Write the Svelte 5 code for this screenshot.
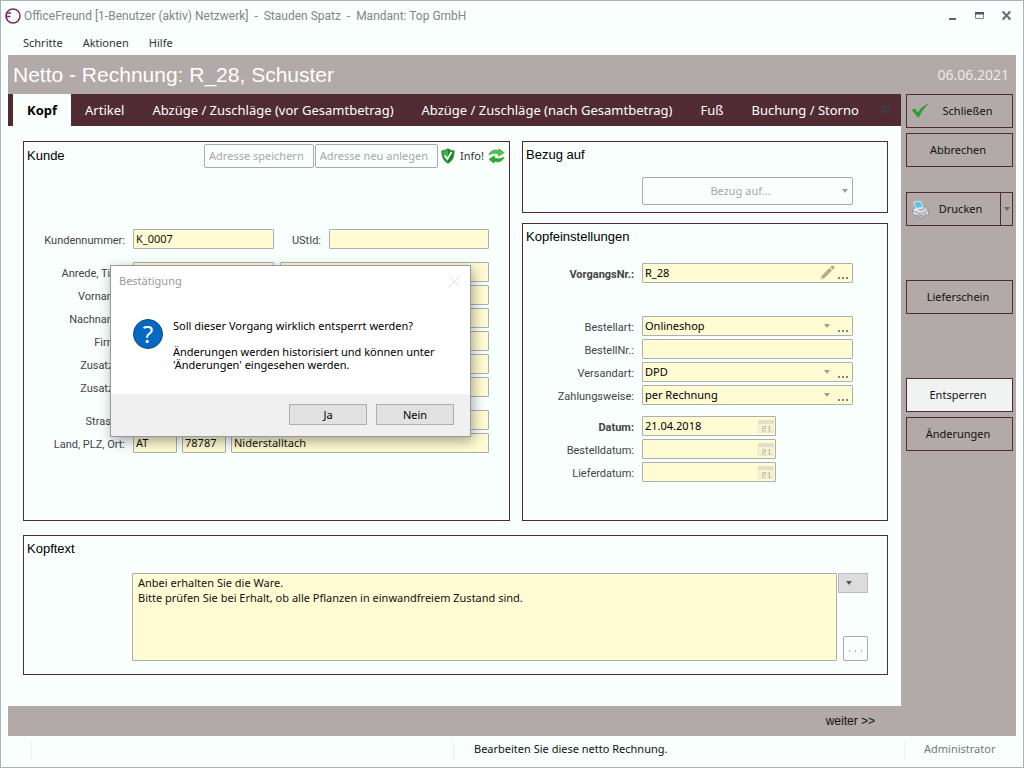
<script>
    const menu = ["Schritte", "Aktionen", "Hilfe"];

    const tabs = [
        "Kopf",
        "Artikel",
        "Abzüge / Zuschläge (vor Gesamtbetrag)",
        "Abzüge / Zuschläge (nach Gesamtbetrag)",
        "Fuß",
        "Buchung / Storno",
    ];
    let activeTab = "Kopf";

    const addressRows = [
        { id: "vorname", label: "Vorname:" },
        { id: "nachname", label: "Nachname:" },
        { id: "firma", label: "Firma:" },
        { id: "zusatz1", label: "Zusatz 1:" },
        { id: "zusatz2", label: "Zusatz 2:" },
    ];

    const dates = [
        { id: "datum", label: "Datum:", value: "21.04.2018", required: true },
        { id: "bestelldatum", label: "Bestelldatum:", value: "" },
        { id: "lieferdatum", label: "Lieferdatum:", value: "" },
    ];

    let dialogOpen = true;

    function closeDialog() {
        dialogOpen = false;
    }
</script>

{#snippet arrow()}
    <svg class="arrow" width="6" height="4" viewBox="0 0 6 4" aria-hidden="true">
        <path d="M0 0h6L3 4z" fill="currentColor" />
    </svg>
{/snippet}

{#snippet dots()}
    <svg width="11" height="2" viewBox="0 0 11 2" aria-hidden="true">
        <path d="M0 0h2v2H0zM4 0h2v2H4zM8 0h2v2H8z" fill="#85857c" />
    </svg>
{/snippet}

{#snippet combo(id, label, value)}
    <label for={id}>{label}</label>
    <div class="box">
        <select {id}>
            <option>{value}</option>
        </select>
        {@render arrow()}
        <button class="more" aria-label="Auswahl bearbeiten">{@render dots()}</button>
    </div>
{/snippet}

<div class="window">
    <header class="titlebar">
        <svg width="16" height="16" viewBox="0 0 16 16" aria-hidden="true">
            <circle cx="8" cy="8" r="7" fill="none" stroke="#7c2a70" stroke-width="1.5" />
            <path d="M1 5h5M1 8.500h4.500M1.500 5v6" fill="none" stroke="#7c2a70" stroke-width="1.300" />
        </svg>
        <span class="caption">OfficeFreund [1-Benutzer (aktiv) Netzwerk] &nbsp;-&nbsp; Stauden Spatz &nbsp;-&nbsp; Mandant: Top GmbH</span>
        <div class="window-buttons">
            <button aria-label="Minimieren">
                <svg width="10" height="10" viewBox="0 0 10 10"><path d="M1 7h7v2H1z" fill="#5b6275" /></svg>
            </button>
            <button aria-label="Maximieren">
                <svg width="10" height="10" viewBox="0 0 10 10">
                    <path d="M.5 1.500h8v6h-8z" fill="none" stroke="#7a829b" />
                    <path d="M0 1h9v2.500H0z" fill="#50566a" />
                </svg>
            </button>
            <button aria-label="Schließen">
                <svg width="10" height="10" viewBox="0 0 10 10">
                    <path d="M1 1l7 7M8 1L1 8" stroke="#656c82" stroke-width="2" />
                    <path d="M0 1h3M6 1h3M0 8h3M6 8h3" stroke="#656c82" />
                </svg>
            </button>
        </div>
    </header>

    <nav class="menu">
        {#each menu as item}
            <button>{item}</button>
        {/each}
    </nav>

    <div class="frame">
        <div class="heading">
            <h1>Netto - Rechnung: R_28, Schuster</h1>
            <time datetime="2021-06-06">06.06.2021</time>
        </div>

        <div class="columns">
            <div class="page">
                <div class="tabs" role="tablist">
                    {#each tabs as tab}
                        <button
                            role="tab"
                            aria-selected={activeTab === tab}
                            class:active={activeTab === tab}
                            on:click={() => (activeTab = tab)}>{tab}</button
                        >
                    {/each}
                    <svg class="overflow" width="9" height="8" viewBox="0 0 9 8" aria-hidden="true">
                        <path d="M0 0h9v2H0zM0 4h9L4.500 8z" fill="#3b3d49" />
                    </svg>
                </div>

                <main class="content">
                    <section class="group kunde">
                        <div class="group-head">
                            <h2>Kunde</h2>
                            <button class="ghost" disabled>Adresse speichern</button>
                            <button class="ghost" disabled>Adresse neu anlegen</button>
                            <button class="info">
                                <svg width="14" height="16" viewBox="0 0 14 16" aria-hidden="true">
                                    <path d="M7 .5C5 2 3 2.500.7 2.500c0 6 1 10 6.300 13 5.300-3 6.300-7 6.300-13C11 2.500 9 2 7 .5z" fill="#14881b" stroke="#8da38f" />
                                    <path d="M7 2C5.500 3 4 3.500 2.200 3.700c0 4 .8 7 4.800 9.800z" fill="#3cb944" />
                                    <path d="M3.500 7.500l3 3.500 4-7" fill="none" stroke="#fff" stroke-width="1.800" />
                                </svg>
                                Info!
                            </button>
                            <button class="refresh" aria-label="Aktualisieren">
                                <svg width="17" height="16" viewBox="0 0 17 16" aria-hidden="true">
                                    <path d="M1 7c1-4 5-6 10-4.300V.7l5 4-5.500 3.600V6C7 4.800 4 5 1 7z" fill="#4cc84a" stroke="#188a1c" stroke-width=".5" />
                                    <path d="M16 9c-1 4-5 6-10 4.300v2l-5-4 5.500-3.600V10c3.500 1.200 6.500 1 9.500-1z" fill="#23b123" stroke="#188a1c" stroke-width=".5" />
                                </svg>
                            </button>
                        </div>

                        <div class="form">
                            <label for="kundennummer">Kundennummer:</label>
                            <div class="fields number">
                                <input id="kundennummer" value="K_0007" />
                                <label for="ustid">UStId:</label>
                                <input id="ustid" />
                            </div>

                            <label class="break" for="anrede">Anrede, Titel:</label>
                            <div class="fields salutation break">
                                <input id="anrede" />
                                <input id="titel" aria-label="Titel" />
                            </div>

                            {#each addressRows as row}
                                <label for={row.id}>{row.label}</label>
                                <input id={row.id} />
                            {/each}

                            <label class="break" for="strasse">Strasse:</label>
                            <input class="break" id="strasse" />

                            <label for="land">Land, PLZ, Ort:</label>
                            <div class="fields city">
                                <input id="land" value="AT" />
                                <input aria-label="PLZ" value="78787" />
                                <input aria-label="Ort" value="Niderstalltach" />
                            </div>
                        </div>

                        {#if dialogOpen}
                            <div class="dialog" role="dialog" aria-labelledby="dialog-title">
                                <div class="dialog-head">
                                    <span id="dialog-title">Bestätigung</span>
                                    <button aria-label="Dialog schließen" on:click={closeDialog}>
                                        <svg width="11" height="11" viewBox="0 0 11 11">
                                            <path d="M.5.5l10 10M10.500.5l-10 10" stroke="#dedede" />
                                        </svg>
                                    </button>
                                </div>
                                <div class="dialog-body">
                                    <div class="question" aria-hidden="true">?</div>
                                    <div>
                                        <p>Soll dieser Vorgang wirklich entsperrt werden?</p>
                                        <p>
                                            Änderungen werden historisiert und können unter
                                            <br />'Änderungen' eingesehen werden.
                                        </p>
                                    </div>
                                </div>
                                <div class="dialog-foot">
                                    <button on:click={closeDialog}>Ja</button>
                                    <button on:click={closeDialog}>Nein</button>
                                </div>
                            </div>
                        {/if}
                    </section>

                    <section class="group bezug">
                        <h2>Bezug auf</h2>
                        <button class="ghost reference" disabled>
                            <span>Bezug auf...</span>
                            {@render arrow()}
                        </button>
                    </section>

                    <section class="group settings">
                        <h2>Kopfeinstellungen</h2>
                        <div class="form">
                            <label class="required" for="vorgang">VorgangsNr.:</label>
                            <div class="box">
                                <input id="vorgang" value="R_28" />
                                <svg width="16" height="16" viewBox="0 0 16 16" aria-hidden="true">
                                    <path d="M2 11.500L10.500 3l2.500 2.500L4.500 14z" fill="#adab91" />
                                    <path d="M11.300 2.200L13 .5c1-.5 3 1.300 2.500 2.500l-1.700 1.700z" fill="#adab91" />
                                    <path d="M1 15l1-3.500L4.500 14z" fill="#d9d7b5" />
                                </svg>
                                <button class="more" aria-label="Nummer bearbeiten">{@render dots()}</button>
                            </div>

                            <div class="spacer"></div>
                            {@render combo("bestellart", "Bestellart:", "Onlineshop")}
                            <label for="bestellnr">BestellNr.:</label>
                            <input id="bestellnr" />
                            {@render combo("versandart", "Versandart:", "DPD")}
                            {@render combo("zahlungsweise", "Zahlungsweise:", "per Rechnung")}

                            <div class="gap"></div>
                            {#each dates as date}
                                <label class:required={date.required} for={date.id}>{date.label}</label>
                                <div class="box date">
                                    <input id={date.id} value={date.value} />
                                    <svg width="16" height="16" viewBox="0 0 16 16" aria-hidden="true">
                                        <path d="M.5 2.500h15v12H.5z" fill="#f6f3d6" stroke="#e9e6ca" />
                                        <path d="M0 2h16v4H0z" fill="#e3e0c5" />
                                        <path d="M4 8.500h3.500v2h-3v2.500H8M10 9.500l1.500-1V13M10 13h3.500" fill="none" stroke="#c5c2a6" stroke-width="1.200" />
                                    </svg>
                                </div>
                            {/each}
                        </div>
                    </section>

                    <section class="group text">
                        <h2><label for="kopftext">Kopftext</label></h2>
                        <div class="text-row">
                            <textarea
                                id="kopftext"
                                value={"Anbei erhalten Sie die Ware.\nBitte prüfen Sie bei Erhalt, ob alle Pflanzen in einwandfreiem Zustand sind."}
                            ></textarea>
                            <div class="text-tools">
                                <button class="template" aria-label="Vorlage wählen">{@render arrow()}</button>
                                <button class="ghost edit" disabled aria-label="Text bearbeiten">
                                    <svg width="14" height="2" viewBox="0 0 14 2"><path d="M0 0h1v2H0zM6 0h1v2H6zM12 0h1v2h-1z" fill="#b5b5a5" /></svg>
                                </button>
                            </div>
                        </div>
                    </section>
                </main>

                <footer class="pager">
                    <button>weiter &gt;&gt;</button>
                </footer>
            </div>

            <aside class="side">
                <button class="with-icon">
                    <svg width="16" height="14" viewBox="0 0 16 14" aria-hidden="true">
                        <path d="M0 6l3-1 3 4C8 5 11 2 16 0 12 4 9 8 6.500 13.500z" fill="#22a422" stroke="#3f8f3a" stroke-width=".5" />
                    </svg>
                    <span>Schließen</span>
                </button>
                <button>Abbrechen</button>
                <div class="split">
                    <button class="with-icon">
                        <svg width="17" height="17" viewBox="0 0 17 17" aria-hidden="true">
                            <path d="M.5 8.500l4-2.500h9l3 4v3.500L9.500 16.500 .5 13z" fill="#dfe2e8" stroke="#858b98" stroke-width=".8" />
                            <path d="M1.500 1l7-.5 2.500 5.500-6.500 1.500z" fill="#4fc3ea" stroke="#e8f6fa" stroke-width=".8" />
                            <path d="M1 10l8 3 7-3.500M5 13.500l5 1.500 5-2.500" fill="none" stroke="#8f95a3" />
                            <path d="M6 8.500l6-1.500 2 1.500L8.500 10.500z" fill="#b3b8c3" />
                            <path d="M13 12h2v1h-2z" fill="#d8bd45" />
                        </svg>
                        <span>Drucken</span>
                    </button>
                    <button class="drop" aria-label="Druckoptionen">{@render arrow()}</button>
                </div>
                <button class="delivery">Lieferschein</button>
                <button class="unlock">Entsperren</button>
                <button>Änderungen</button>
            </aside>
        </div>
    </div>

    <footer class="status">
        <span></span>
        <span></span>
        <span class="message">Bearbeiten Sie diese netto Rechnung.</span>
        <span class="user">Administrator</span>
    </footer>
</div>

<style>
    :global(body) {
        margin: 0;
    }

    .window {
        --paper: #f8fffd;
        --wine: #512b34;
        --taupe: #b2a9a9;
        --yellow: #fffbd2;
        --line: #a9afb5;
        --ui: "Noto Sans", "Open Sans", sans-serif;
        --arial: "Liberation Sans", Arial, sans-serif;

        box-sizing: border-box;
        min-height: 100vh;
        display: flex;
        flex-direction: column;
        padding: 0 7px;
        border: 1px solid #b0b0ba;
        background: var(--paper);
        color: #111;
        font: 11px/16px var(--ui);
    }

    .window :global(*) {
        box-sizing: border-box;
    }

    button,
    input,
    select,
    textarea {
        margin: 0;
        padding: 0;
        border: 0;
        border-radius: 0;
        background: none;
        color: inherit;
        font: inherit;
    }

    svg {
        display: block;
        flex: none;
    }

    h1,
    h2,
    p {
        margin: 0;
        font-weight: normal;
    }

    /* Title bar and menu */
    .titlebar {
        display: flex;
        align-items: center;
        height: 30px;
        margin-left: -3px;
        gap: 3px;
    }

    .caption {
        flex: 1;
        color: #858585;
        font: 12px/16px Roboto, var(--ui);
    }

    .window-buttons {
        display: flex;
        gap: 17px;
        padding-right: 4px;
    }

    .menu {
        display: flex;
        gap: 20px;
        height: 24px;
        padding-left: 15px;
        color: #333;
    }

    /* Frame */
    .frame {
        flex: 1;
        display: flex;
        flex-direction: column;
        background: var(--taupe);
    }

    .heading {
        display: flex;
        align-items: center;
        justify-content: space-between;
        height: 39px;
        padding: 0 7px 0 5px;
        color: #fff;
    }

    h1 {
        font: 21px/24px var(--arial);
    }

    time {
        color: #efeeee;
        font: 14px/20px "Open Sans", "Noto Sans", sans-serif;
    }

    .columns {
        flex: 1;
        display: grid;
        grid-template-columns: 1fr 115px;
    }

    .page {
        display: flex;
        flex-direction: column;
    }

    /* Tabs */
    .tabs {
        display: flex;
        align-items: center;
        height: 32px;
        padding-left: 5px;
        background: var(--wine);
        color: #fff;
        font: 13px/20px var(--ui);
    }

    .tabs button {
        height: 32px;
        padding: 0 14px;
        white-space: nowrap;
    }

    .tabs .active {
        background: var(--paper);
        color: #000;
        font-weight: bold;
    }

    .overflow {
        margin: 0 11px 0 auto;
    }

    /* Groups */
    .content {
        flex: 1;
        display: grid;
        grid-template-columns: 487fr 366fr;
        grid-template-rows: 72px 298px 140px;
        gap: 10px 12px;
        padding: 15px 13px 31px 15px;
        background: var(--paper);
    }

    .group {
        border: 1px solid var(--wine);
        padding: 1px 34px 0 3px;
    }

    h2 {
        font: 13px/24px var(--arial);
        color: #000;
    }

    .kunde {
        position: relative;
        grid-row: 1 / 3;
        padding: 1px 4px 0 3px;
    }

    .text {
        grid-column: 1 / 3;
        margin-top: 4px;
        margin-bottom: -4px;
        padding-right: 19px;
    }

    .group-head {
        display: flex;
        align-items: center;
        gap: 1px;
    }

    .group-head h2 {
        flex: 1;
        line-height: 26px;
    }

    .ghost {
        height: 24px;
        padding: 0 9px 0 4px;
        border: 1px solid #aaa;
        border-radius: 2px;
        color: #a8a8a8;
    }

    .info {
        display: flex;
        align-items: center;
        gap: 5px;
        margin: 0 3px 0 2px;
        color: #333;
    }

    /* Form rows */
    .form {
        display: grid;
        grid-template-columns: 98px 1fr;
        gap: 3px 8px;
    }

    .kunde .form {
        padding: 60px 16px 0 0;
    }

    .settings .form {
        grid-template-columns: 108px 1fr;
        padding-top: 14px;
    }

    .form label {
        padding-top: 3px;
        color: #444;
        font: 11px/17px Roboto, var(--arial);
        text-align: right;
        white-space: nowrap;
    }

    .form label.required {
        font-weight: bold;
    }

    .form input,
    .box {
        min-width: 0;
        width: 100%;
        height: 20px;
        padding: 0 2px;
        border: 1px solid var(--line);
        border-radius: 1px;
        background: var(--yellow);
    }

    .form input {
        padding-bottom: 2px;
    }

    .form .break {
        margin-top: 10px;
    }

    .fields {
        display: grid;
        gap: 6px;
    }

    .number {
        grid-template-columns: 141fr 39px 160fr;
        gap: 8px;
    }

    .salutation {
        grid-template-columns: 141fr 209fr;
    }

    .city {
        grid-template-columns: 44px 44px 1fr;
        gap: 5px;
    }

    .box {
        display: flex;
        align-items: center;
        color: #000;
    }

    .form .box input,
    .box select {
        flex: 1;
        height: 18px;
        padding: 0;
        border: 0;
        background: none;
        appearance: none;
    }

    .form .box input {
        padding-bottom: 2px;
    }

    .arrow {
        color: #a19f8b;
    }

    .more {
        display: flex;
        align-items: flex-end;
        height: 12px;
        margin: 0 1px 0 3px;
    }

    .box .arrow + .more {
        margin-left: 8px;
    }

    .form .date {
        width: 134px;
        padding-right: 1px;
    }

    .spacer {
        grid-column: 1 / 3;
        height: 27px;
    }

    .gap {
        grid-column: 1 / 3;
        height: 5px;
    }

    .reference {
        display: flex;
        align-items: center;
        width: calc(100% - 116px);
        height: 28px;
        margin: 10px 0 0 116px;
        padding: 0 4px 0 0;
    }

    .reference span {
        flex: 1;
        padding-right: 4px;
    }

    /* Kopftext */
    .text-row {
        display: flex;
        gap: 1px;
        padding: 12px 0 0 105px;
    }

    textarea {
        flex: 1;
        height: 88px;
        padding: 1px 5px;
        border: 1px solid var(--line);
        border-radius: 1px;
        background: var(--yellow);
        line-height: 15px;
        resize: none;
    }

    .text-tools {
        display: flex;
        flex-direction: column;
        align-items: flex-end;
        justify-content: space-between;
    }

    .template {
        width: 30px;
        height: 20px;
        padding-left: 7px;
        border: 1px solid #bdbdbd;
        background: #dcdcdc;
    }

    .template .arrow {
        color: #555;
    }

    .edit {
        width: 25px;
        height: 25px;
        padding: 4px 0 0 5px;
    }

    .pager {
        display: flex;
        justify-content: flex-end;
        height: 30px;
        padding-right: 26px;
        font: 12px/16px var(--arial);
    }

    /* Side buttons */
    .side {
        display: flex;
        flex-direction: column;
        gap: 5px;
        padding: 0 3px 0 5px;
    }

    .side button {
        height: 34px;
        padding-right: 3px;
        border: 1px solid var(--wine);
    }

    .side .with-icon {
        display: flex;
        align-items: center;
        padding: 0 5px;
    }

    .with-icon span {
        flex: 1;
    }

    .split {
        display: flex;
        margin: 20px 0 49px;
    }

    .split .with-icon {
        flex: 1;
        padding-right: 8px;
    }

    .side .drop {
        width: 13px;
        margin-left: -1px;
        padding-left: 3px;
    }

    .drop .arrow {
        color: #666;
    }

    .side .delivery {
        margin-bottom: 59px;
    }

    .side .unlock {
        background: #f1f3f2;
    }

    /* Status bar */
    .status {
        display: grid;
        grid-template-columns: 23px 422px 1fr 112px;
        height: 31px;
        padding: 5px 0 7px;
    }

    .status span + span {
        border-left: 1px solid #edf2f0;
    }

    .status .message {
        padding-left: 20px;
    }

    .status .user {
        padding-left: 19px;
        color: #777;
    }

    /* Confirmation dialog */
    .dialog {
        position: absolute;
        top: 123px;
        left: 86px;
        width: 361px;
        border: 1px solid #999;
        background: #fff;
        box-shadow: 2px 4px 12px rgba(0, 0, 0, 0.35);
    }

    .dialog-head {
        display: flex;
        align-items: center;
        justify-content: space-between;
        height: 30px;
        padding: 0 10px 0 8px;
        color: #999;
    }

    .dialog-body {
        display: flex;
        gap: 10px;
        height: 98px;
        padding: 23px 22px 0;
        color: #000;
        line-height: 13px;
        white-space: nowrap;
    }

    .dialog-body p + p {
        margin-top: 13px;
    }

    .question {
        width: 30px;
        height: 30px;
        border: 1px solid #17497a;
        border-radius: 50%;
        background: #0369c3;
        color: #fff;
        font: 24px/28px var(--ui);
        text-align: center;
    }

    .dialog-foot {
        display: flex;
        justify-content: flex-end;
        gap: 9px;
        padding: 10px 16px 11px;
        background: #f0f0f0;
        color: #000;
    }

    .dialog-foot button {
        width: 78px;
        height: 21px;
        border: 1px solid #adadad;
        background: #e1e1e1;
    }
</style>
